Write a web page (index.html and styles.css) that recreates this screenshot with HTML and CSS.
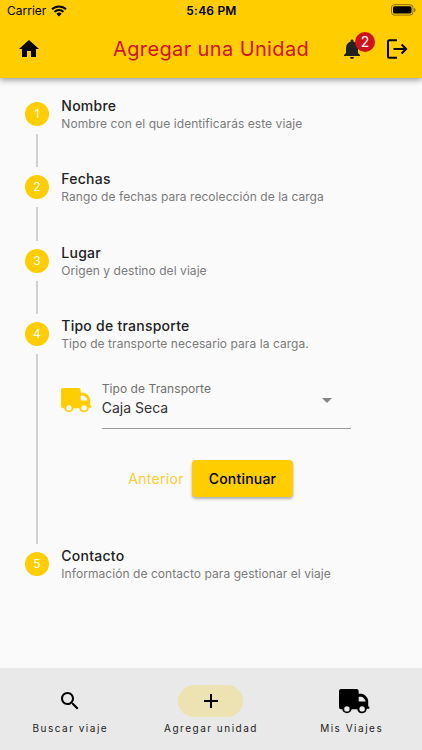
FILE: index.html
```html
<!DOCTYPE html>
<html lang="es">
<head>
    <meta charset="UTF-8">
    <meta name="viewport" content="width=device-width, initial-scale=1.0">
    <title>Agregar una Unidad</title>
    <link rel="stylesheet" href="styles.css">
</head>
<body>
    <header class="header">
        <div class="status-bar">
            <div class="carrier">
                <span>Carrier</span>
                <svg width="16" height="12" viewBox="0 0 16 12">
                    <path d="M1 4.3a10 10 0 0 1 14 0M3.5 6.9a6.4 6.4 0 0 1 9 0" fill="none" stroke="#000" stroke-width="2"/>
                    <path d="M8 11.4L5.4 8.8a3.7 3.7 0 0 1 5.2 0z"/>
                </svg>
            </div>
            <span class="time">5:46 PM</span>
            <svg class="battery" width="25" height="12" viewBox="0 0 25 12">
                <rect x=".5" y=".7" width="21.5" height="10.4" rx="3" fill="none" stroke="#000" stroke-opacity=".45"/>
                <rect x="2" y="2.2" width="18.5" height="7.4" rx="1.6"/>
                <path d="M23.2 4v4c.8-.3 1.3-1.1 1.3-2s-.5-1.7-1.3-2z" opacity=".5"/>
            </svg>
        </div>
        <div class="toolbar">
            <svg class="home" width="24" height="24" viewBox="0 0 24 24"><path d="M10 20v-6h4v6h5v-8h3L12 3 2 12h3v8z"/></svg>
            <h1 class="title">Agregar una Unidad</h1>
            <div class="bell">
                <svg width="24" height="24" viewBox="0 0 24 24"><path fill="#222" d="M12 22c1.1 0 2-.9 2-2h-4c0 1.1.89 2 2 2zm6-6v-5c0-3.07-1.64-5.64-4.5-6.32V4c0-.83-.67-1.5-1.5-1.5s-1.5.67-1.5 1.5v.68C7.63 5.36 6 7.92 6 11v5l-2 2v1h16v-1l-2-2z"/></svg>
                <span class="badge">2</span>
            </div>
            <svg class="logout" width="22" height="20" viewBox="0 0 22 20">
                <path d="M11 1.2H3.500Q2 1.200 2 2.700v14.600q0 1.500 1.500 1.500H11M7.500 10H20M15.600 5.500L20.100 10l-4.500 4.500" fill="none" stroke="#000" stroke-width="2"/>
            </svg>
        </div>
    </header>

    <main class="stepper">
        <section class="step">
            <div class="rail"><span class="circle">1</span></div>
            <div class="step-body">
                <h2>Nombre</h2>
                <p>Nombre con el que identificarás este viaje</p>
            </div>
        </section>
        <section class="step">
            <div class="rail"><span class="circle">2</span></div>
            <div class="step-body">
                <h2>Fechas</h2>
                <p>Rango de fechas para recolección de la carga</p>
            </div>
        </section>
        <section class="step">
            <div class="rail"><span class="circle">3</span></div>
            <div class="step-body">
                <h2>Lugar</h2>
                <p>Origen y destino del viaje</p>
            </div>
        </section>
        <section class="step active">
            <div class="rail"><span class="circle">4</span></div>
            <div class="step-body">
                <h2>Tipo de transporte</h2>
                <p>Tipo de transporte necesario para la carga.</p>
                <div class="field">
                    <svg class="truck" width="31" height="25" viewBox="0 0 31 25"><use href="#truck"/></svg>
                    <div class="select">
                        <div>
                            <label>Tipo de Transporte</label>
                            <span class="value">Caja Seca</span>
                        </div>
                        <span class="arrow"></span>
                    </div>
                </div>
                <div class="buttons">
                    <button class="btn-back">Anterior</button>
                    <button class="btn-next">Continuar</button>
                </div>
            </div>
        </section>
        <section class="step">
            <div class="rail"><span class="circle">5</span></div>
            <div class="step-body">
                <h2>Contacto</h2>
                <p>Información de contacto para gestionar el viaje</p>
            </div>
        </section>
    </main>

    <nav class="bottom-nav">
        <a class="nav-item">
            <span class="nav-icon"><svg width="24" height="24" viewBox="0 0 24 24"><path d="M15.5 14h-.79l-.28-.27C15.41 12.59 16 11.11 16 9.5 16 5.91 13.09 3 9.5 3S3 5.91 3 9.5 5.91 16 9.5 16c1.61 0 3.09-.59 4.23-1.57l.27.28v.79l5 4.99L20.49 19l-4.99-5zm-6 0C7.01 14 5 11.99 5 9.5S7.01 5 9.5 5 14 7.01 14 9.5 11.99 14 9.5 14z"/></svg></span>
            <span>Buscar viaje</span>
        </a>
        <a class="nav-item">
            <span class="nav-icon selected"><svg width="24" height="24" viewBox="0 0 24 24"><path d="M19 13h-6v6h-2v-6H5v-2h6V5h2v6h6v2z"/></svg></span>
            <span>Agregar unidad</span>
        </a>
        <a class="nav-item">
            <span class="nav-icon"><svg class="nav-truck" width="31" height="25" viewBox="0 0 31 25">
                <path id="truck" fill-rule="evenodd" d="M2 0H17.500Q19.700 0 19.700 2.200V4.700H22.500Q24.500 4.700 26 6.200L27.800 8.200Q29.200 9.800 29.200 12V17.600H30.300V19.800H27.800A4.800 4.800 0 0 1 18.300 20.300H12.600A4.800 4.800 0 0 1 3.200 20.300H2Q0 20.300 0 18.300V2Q0 0 2 0zM19.700 7.700V12.400H26.500Q26.400 11 25.400 10L24.300 8.700Q23.500 7.700 22.200 7.700zM7.900 17.200a2.700 2.700 0 1 0 0 5.400a2.700 2.700 0 1 0 0-5.400zM23.100 17.200a2.700 2.700 0 1 0 0 5.400a2.700 2.700 0 1 0 0-5.400z"/>
            </svg></span>
            <span>Mis Viajes</span>
        </a>
    </nav>
</body>
</html>
```
FILE: styles.css
```css
* {
    padding: 0;
    margin: 0;
    box-sizing: border-box;
}
body {
    height: 750px;
    display: flex;
    flex-direction: column;
    background-color: #fafafa;
    font-family: Inter, "Liberation Sans", sans-serif;
    overflow: hidden;
}
svg {
    display: block;
    flex-shrink: 0;
}
.header {
    height: 78px;
    background-color: #ffcd00;
    box-shadow: 0 2px 6px rgba(0,0,0,0.4);
}
.status-bar {
    height: 22px;
    display: grid;
    grid-template-columns: 1fr auto 1fr;
    align-items: center;
    padding: 0 6px 0 7px;
    font-size: 12px;
}
.carrier {
    display: flex;
    align-items: center;
    gap: 5px;
    margin-top: -1px;
}
.time {
    margin-top: -1px;
    font-weight: 600;
    letter-spacing: 0.2px;
}
.battery {
    justify-self: end;
    margin-top: -2px;
}
.toolbar {
    height: 54px;
    display: flex;
    align-items: center;
    padding: 0 14px 0 17px;
}
.title {
    margin-left: 72px;
    width: 201px;
    white-space: nowrap;
    font-size: 20px;
    font-weight: 400;
    letter-spacing: 0.38px;
    color: #d0121b;
}
.bell {
    position: relative;
    margin-left: 26px;
}
.badge {
    position: absolute;
    top: -5px;
    left: 15px;
    width: 20px;
    height: 20px;
    border-radius: 50%;
    background-color: #d0121b;
    color: white;
    font-size: 14px;
    line-height: 20px;
    text-align: center;
}
.logout {
    margin-left: auto;
}
.stepper {
    flex: 1;
    padding: 24px 24px 0 25px;
}
.step {
    display: flex;
    gap: 12.3px;
    height: 73.4px;
}
.step.active {
    height: 230px;
}
.rail {
    width: 24px;
    display: flex;
    flex-direction: column;
    align-items: center;
}
.rail::after {
    content: "";
    flex: 1;
    width: 1.5px;
    margin: 8px 0;
    background-color: #d0d0d0;
}
.step:last-child .rail::after {
    display: none;
}
.circle {
    width: 24px;
    height: 24px;
    border-radius: 50%;
    background-color: #ffcd00;
    color: white;
    font-size: 12px;
    line-height: 24px;
    text-align: center;
}
.step-body {
    flex: 1;
    margin-top: -6px;
}
.step-body h2 {
    font-size: 14px;
    font-weight: 500;
    line-height: 20px;
    letter-spacing: 0.25px;
    color: #222;
}
.step-body p {
    font-size: 12px;
    line-height: 16px;
    letter-spacing: 0.06px;
    color: #7a7a7a;
    white-space: nowrap;
}
.field {
    display: flex;
    gap: 10px;
    margin-top: 28px;
}
.truck {
    margin-top: 8px;
    fill: #ffcd00;
}
.select {
    width: 249px;
    height: 49px;
    display: flex;
    justify-content: space-between;
    margin-left: -0.6px;
    border-bottom: 1px solid #999;
}
.select label {
    display: block;
    font-size: 12px;
    line-height: 17px;
    letter-spacing: 0.07px;
    color: #707070;
}
.value {
    display: block;
    font-size: 14px;
    line-height: 21px;
    color: #333;
}
.arrow {
    margin: 18px 19px 0 0;
    height: 5px;
    border: 5px solid transparent;
    border-top-color: #858585;
    border-bottom: 0;
}
.buttons {
    display: flex;
    align-items: center;
    gap: 8px;
    margin: 31px 0 0 66.7px;
}
.buttons button {
    border: 0;
    padding-bottom: 1px;
    font-family: inherit;
    font-size: 14px;
    letter-spacing: 0.2px;
}
.buttons .btn-back {
    width: 56px;
    background: none;
    color: #ffcd30;
    white-space: nowrap;
    letter-spacing: 0.3px;
}
.btn-next {
    width: 101px;
    height: 37px;
    border-radius: 4px;
    background-color: #ffcd00;
    font-weight: 500;
    box-shadow: 0 2px 3px rgba(0,0,0,0.3);
}
.bottom-nav {
    height: 82px;
    display: grid;
    grid-template-columns: repeat(3, 1fr);
    background-color: #e9e9e9;
}
.nav-item {
    display: flex;
    flex-direction: column;
    align-items: center;
    padding-top: 17px;
    gap: 4px;
    font-size: 10px;
    line-height: 14px;
    letter-spacing: 1.5px;
    color: #222;
}
.nav-icon {
    width: 65px;
    height: 32px;
    display: flex;
    align-items: center;
    justify-content: center;
    border-radius: 16px;
}
.nav-icon.selected {
    background-color: #ede2b1;
}
.nav-truck {
    margin-left: 6px;
}
```
